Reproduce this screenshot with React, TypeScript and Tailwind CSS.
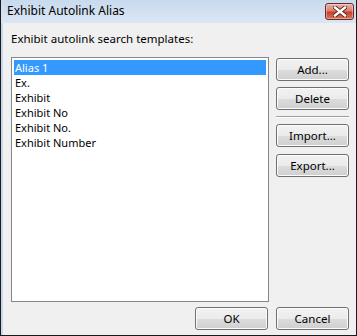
import React from "react";

const font = { fontFamily: '"Noto Sans", "Open Sans", sans-serif' };

function Btn({ label, className = "" }: { label: string; className?: string }) {
  return (
    <div
      className={
        "flex h-[23px] w-[73px] items-center justify-center rounded-[3px] border border-[#707070] text-[11.5px] leading-[14px] text-black shadow-[inset_0_0_0_1px_#fcfcfc] bg-[linear-gradient(#f2f2f2_0%,#ebebeb_50%,#dddddd_51%,#cfcfcf_100%)] " +
        className
      }
    >
      {label}
    </div>
  );
}

export default function App() {
  const items = ["Alias 1", "Ex.", "Exhibit", "Exhibit No", "Exhibit No.", "Exhibit Number"];
  return (
    <div className="h-[336px] w-[357px] overflow-hidden bg-[#f0f0f0]" style={font}>
      <div className="flex h-full w-full flex-col border-x border-b border-[#1a1a1a]">
        {/* title bar */}
        <div className="flex h-[23px] items-start justify-between bg-[linear-gradient(#c8daee,#dae6f4)] pl-[6px] pr-[2px]">
          <span className="mt-[3px] text-[12px] leading-[16px] text-black">Exhibit Autolink Alias</span>
          <div className="mt-[3px] flex h-[17px] w-[29px] items-center justify-center rounded-[3px] border border-[#6b2a24] bg-[linear-gradient(#e8b2a8,#d8806d_45%,#c4432c_55%,#d2765a)] shadow-[inset_0_0_0_1px_rgba(255,255,255,0.35)]">
            <svg width="14" height="11" viewBox="0 0 14 11">
              <path
                d="M2 1.5 L12 9.5 M12 1.5 L2 9.5"
                stroke="#5a1f18"
                strokeWidth="4.2"
                strokeLinecap="square"
              />
              <path
                d="M2 1.5 L12 9.5 M12 1.5 L2 9.5"
                stroke="#ffffff"
                strokeWidth="2.4"
                strokeLinecap="square"
              />
            </svg>
          </div>
        </div>
        {/* client */}
        <div className="flex flex-1 border-l-2 border-[#c6d8ec]">
          <div className="flex flex-1 flex-col pl-[8px] pr-[9px]">
            <div className="mt-[8px] h-[16px] text-[11.5px] leading-[16px] text-black">
              Exhibit autolink search templates:
            </div>
            <div className="mt-[10px] flex gap-[7px]">
              <div className="h-[245px] w-[258px] border border-[#828790] bg-white p-[2px]">
                {items.map((it, i) => (
                  <div
                    key={it}
                    className={
                      "h-[15px] pl-[1px] text-[11px] leading-[15px] " +
                      (i === 0 ? "bg-[#3399ff] text-white" : "text-black")
                    }
                  >
                    {it}
                  </div>
                ))}
              </div>
              <div className="flex flex-col pt-[1px]">
                <Btn label="Add..." />
                <Btn label="Delete" className="mt-[6px]" />
                <div className="my-[6px] h-[2px] w-[73px] border-t border-[#a0a0a0] border-b-white border-b" />
                <Btn label="Import..." />
                <Btn label="Export..." className="mt-[7px]" />
              </div>
            </div>
            <div className="mt-[5px] flex justify-end gap-[8px]">
              <Btn label="OK" />
              <Btn label="Cancel" />
            </div>
          </div>
        </div>
      </div>
    </div>
  );
}
